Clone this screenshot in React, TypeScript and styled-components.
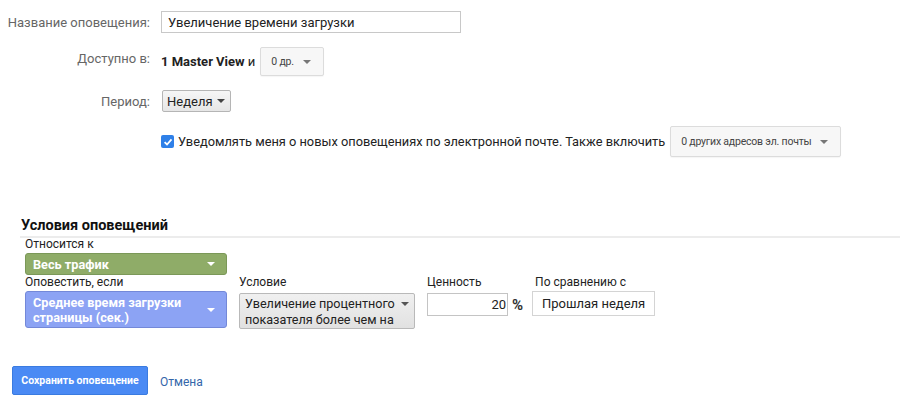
import { FC } from 'react'
import styled, { createGlobalStyle } from 'styled-components'

const GlobalStyle = createGlobalStyle`
   body {
      margin: 0;
      background: #fff;
      font-family: Roboto, 'Liberation Sans', Arial, sans-serif;
      color: #222;
   }
`

const App: FC = () => {
   return (
      <Page>
         <GlobalStyle />

         <Form>
            <Label>Название оповещения:</Label>
            <Field>
               <TextInput defaultValue='Увеличение времени загрузки' />
            </Field>

            <Label $lift>Доступно в:</Label>
            <Field>
               <Strong>1 Master View</Strong>
               <span>&nbsp;и</span>
               <FlatSelect $width={64} $height={29}>
                  0 др.
                  <Caret $color='#777' />
               </FlatSelect>
            </Field>

            <Label>Период:</Label>
            <Field>
               <PeriodSelect>
                  Неделя
                  <Caret $color='#444' />
               </PeriodSelect>
            </Field>

            <span />
            <Field>
               <Check>
                  <svg width='10' height='10' viewBox='0 0 10 10'>
                     <path d='M1.6 5.2 L4 7.5 L8.5 2.4' stroke='#fff' strokeWidth='1.8' fill='none' />
                  </svg>
               </Check>
               <NotifyText>Уведомлять меня о новых оповещениях по электронной почте. Также включить</NotifyText>
               <FlatSelect $width={171} $height={31}>
                  0 других адресов эл. почты
                  <Caret $color='#777' />
               </FlatSelect>
            </Field>
         </Form>

         <Section>
            <Heading>Условия оповещений</Heading>

            <Conditions>
               <SmallLabel>Относится к</SmallLabel>
               <ColorSelect $bg='#8fac68' $border='#7b9858' $height={22}>
                  <span>Весь трафик</span>
                  <Caret $color='#fff' />
               </ColorSelect>

               <Row>
                  <Col>
                     <SmallLabel>Оповестить, если</SmallLabel>
                     <ColorSelect $bg='#8ca3f4' $border='#7388d8' $height={37}>
                        <span>
                           Среднее время загрузки
                           <br />
                           страницы (сек.)
                        </span>
                        <Caret $color='#fff' />
                     </ColorSelect>
                  </Col>

                  <Col>
                     <SmallLabel>Условие</SmallLabel>
                     <GreySelect>
                        <span>
                           Увеличение процентного
                           <br />
                           показателя более чем на
                        </span>
                        <Caret $color='#555' />
                     </GreySelect>
                  </Col>

                  <Col>
                     <SmallLabel>Ценность</SmallLabel>
                     <ValueLine>
                        <NumberBox>20</NumberBox>
                        <Percent>%</Percent>
                     </ValueLine>
                  </Col>

                  <Col>
                     <SmallLabel>По сравнению с</SmallLabel>
                     <CompareBox>Прошлая неделя</CompareBox>
                  </Col>
               </Row>
            </Conditions>
         </Section>

         <Actions>
            <SaveButton>Сохранить оповещение</SaveButton>
            <CancelLink>Отмена</CancelLink>
         </Actions>
      </Page>
   )
}

export default App

const Page = styled.main`
   width: 900px;
   height: 402px;
   overflow: hidden;
   font-size: 13px;
`

const Form = styled.div`
   display: grid;
   grid-template-columns: 150px 1fr;
   align-items: center;
   column-gap: 11px;
   row-gap: 14px;
   padding-top: 11px;
`

const Label = styled.div<{ $lift?: boolean }>`
   text-align: right;
   color: #666;
   font-size: 13px;
   position: relative;
   top: ${(p) => (p.$lift ? '-3px' : '0')};
`

const Field = styled.div`
   display: flex;
   align-items: center;
   font-size: 13px;
   color: #222;
`

const TextInput = styled.input`
   width: 300px;
   height: 22px;
   box-sizing: border-box;
   border: 1px solid #c8c8c8;
   padding: 0 6px;
   font-family: Roboto, 'Liberation Sans', Arial, sans-serif;
   font-size: 13px;
   color: #222;
   outline: none;
`

const Strong = styled.span`
   font-weight: bold;
   color: #222;
`

const Caret = styled.span<{ $color: string }>`
   display: inline-block;
   flex-shrink: 0;
   width: 0;
   height: 0;
   border-left: 4px solid transparent;
   border-right: 4px solid transparent;
   border-top: 4px solid ${(p) => p.$color};
   margin-left: auto;
`

const FlatSelect = styled.div<{ $width: number; $height: number }>`
   display: flex;
   align-items: center;
   box-sizing: border-box;
   width: ${(p) => p.$width}px;
   height: ${(p) => p.$height}px;
   margin-left: 5px;
   padding: 0 12px 0 10px;
   border: 1px solid #dcdcdc;
   border-radius: 2px;
   background: #f7f7f7;
   font-size: 10.5px;
   letter-spacing: -0.2px;
   white-space: nowrap;
   color: #444;
   box-shadow: 0 1px 1px rgba(0, 0, 0, 0.04);
`

const PeriodSelect = styled.div`
   display: flex;
   align-items: center;
   box-sizing: border-box;
   height: 22px;
   padding: 0 5px 0 4px;
   border: 1px solid #b5b5b5;
   border-radius: 2px;
   background: linear-gradient(#f6f6f6, #e6e6e6);
   font-size: 13px;
   color: #222;
   margin-left: 1px;

   ${Caret} {
      margin-left: 4px;
   }
`

const Check = styled.span`
   display: inline-flex;
   align-items: center;
   justify-content: center;
   width: 13px;
   height: 13px;
   border-radius: 2px;
   background: #2f80e8;
   margin-right: 4px;
`

const NotifyText = styled.span`
   font-size: 12.8px;
   color: #222;
`

const Section = styled.section`
   margin-top: 60px;
   padding-left: 20px;
`

const Heading = styled.h2`
   margin: 0;
   padding: 0 0 2px 1px;
   font-size: 14.5px;
   line-height: 17px;
   font-weight: bold;
   color: #111;
   border-bottom: 2px solid #ececec;
`

const Conditions = styled.div`
   padding-left: 5px;
`

const SmallLabel = styled.div`
   font-size: 12px;
   color: #222;
   line-height: 13px;
   margin-bottom: 2px;
`

const ColorSelect = styled.div<{ $bg: string; $border: string; $height: number }>`
   display: flex;
   align-items: center;
   box-sizing: border-box;
   width: 202px;
   height: ${(p) => p.$height}px;
   padding: 0 11px 0 7px;
   background: ${(p) => p.$bg};
   border: 1px solid ${(p) => p.$border};
   border-radius: 3px;
   color: #fff;
   font-weight: bold;
   font-size: 12.7px;
   line-height: 15px;
`

const Row = styled.div`
   display: flex;
   gap: 12px;
   margin-top: 1px;
`

const Col = styled.div`
   display: flex;
   flex-direction: column;
`

const GreySelect = styled.div`
   display: flex;
   align-items: flex-start;
   box-sizing: border-box;
   width: 176px;
   height: 36px;
   margin-top: 2px;
   padding: 2px 5px 0 5px;
   background: linear-gradient(#f0f0f0, #e1e1e1);
   border: 1px solid #b9b9b9;
   border-radius: 2px;
   font-size: 12.6px;
   line-height: 16px;
   color: #222;

   ${Caret} {
      margin-top: 6px;
   }
`

const ValueLine = styled.div`
   display: flex;
   align-items: center;
   margin-top: 2px;
`

const NumberBox = styled.div`
   box-sizing: border-box;
   width: 81px;
   height: 23px;
   border: 1px solid #c4c4c4;
   text-align: right;
   padding: 3px 1px 0 0;
   font-size: 13px;
`

const Percent = styled.span`
   font-size: 15px;
   font-weight: bold;
   color: #333;
   margin-left: 4px;
`

const CompareBox = styled.div`
   box-sizing: border-box;
   width: 123px;
   height: 25px;
   display: flex;
   align-items: center;
   justify-content: center;
   border: 1px solid #d4d4d4;
   font-size: 13px;
   color: #222;
   margin-left: -3px;
`

const Actions = styled.div`
   display: flex;
   align-items: center;
   gap: 12px;
   margin-top: 37px;
   padding-left: 12px;
`

const SaveButton = styled.button`
   height: 29px;
   width: 136px;
   border: 1px solid #3a7be0;
   border-radius: 2px;
   background: #4a8af4;
   color: #fff;
   font-family: Roboto, 'Liberation Sans', Arial, sans-serif;
   font-weight: bold;
   font-size: 10.5px;
   padding: 0;
`

const CancelLink = styled.a`
   color: #3366aa;
   font-size: 12px;
   cursor: pointer;
   margin-top: 2px;
`
